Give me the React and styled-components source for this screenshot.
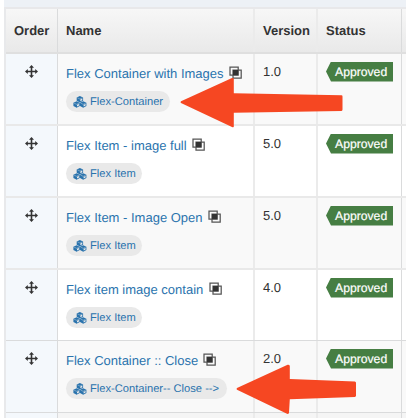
import React from 'react';
import styled, { createGlobalStyle } from 'styled-components';

const Global = createGlobalStyle`
  * { box-sizing: border-box; }
  body { margin: 0; background: #fff; overflow: hidden; }
`;

const Page = styled.main`
  position: relative;
  width: 406px;
  height: 418px;
  padding: 7px 0 0 4px;
  overflow: hidden;
  background: linear-gradient(to right, #fff 4px, transparent 4px),
    linear-gradient(#edf1f6 7px, #f5f5f5 7px);
  font-family: 'Liberation Sans', Arial, sans-serif;
  font-size: 13px;
  text-rendering: geometricPrecision;
  color: #333;
`;

const Table = styled.div`
  display: grid;
  grid-template-rows: 45px 72px 72px 72px 71px 72px 6px;
  border-top: 2px solid #e8e8ea;
  border-left: 2px solid #e8e9eb;
`;

const Row = styled.div`
  display: grid;
  grid-template-columns: 52px 197px 63px 84px 4px;
  background: ${({ $bg }) => $bg};
  border-bottom: ${({ $line }) => $line};
`;

const HeaderRow = styled(Row)`
  background: linear-gradient(#f7f7f7, #e9e9e9);
  border-bottom: 2px solid #dfdfdf;
  font-weight: 700;
  line-height: 16px;
`;

const Cell = styled.div`
  padding: ${({ $top }) => $top || 0}px 0 0 8px;
  white-space: nowrap;
  min-width: 0;
  border-right: ${({ $edge }) => $edge || '2px solid #ebebeb'};
`;

const OrderCell = styled(Cell)`
  display: flex;
  justify-content: center;
  padding: 11px 0 0;
  background: #f4f8fc;
`;

const Title = styled.div`
  display: flex;
  align-items: flex-start;
  height: 25px;
  line-height: 16px;
  color: #2a73ad;
`;

const TitleText = styled.a`
  flex: none;
  width: ${({ $w }) => $w}px;
`;

const CopyIcon = styled.svg`
  flex: none;
  width: 13px;
  height: 13px;
  margin: 0 0 0 4.8px;
`;

const Pill = styled.span`
  display: flex;
  align-items: center;
  width: ${({ $w }) => $w}px;
  height: 21px;
  padding-left: 7px;
  border-radius: 11px;
  background: #e9e9e9;
  color: #2a73ad;
  font-size: 11.15px;
  line-height: 21px;
`;

const PillLabel = styled.span`
  padding-top: 1px;
`;

const CubeIcon = styled.svg`
  width: 14px;
  height: 12px;
  margin-right: 3px;
  flex: none;
`;

const Tag = styled.span`
  display: block;
  width: 67px;
  height: 20px;
  padding-left: 9px;
  background: #467e43;
  clip-path: polygon(5px 0, 100% 0, 100% 100%, 5px 100%, 0 50%);
  color: #fff;
  font-size: 12.2px;
  line-height: 21px;
  -webkit-text-stroke: 0.2px #fff;
`;

const Arrow = styled.svg`
  position: absolute;
  left: ${({ $x }) => $x}px;
  top: ${({ $y }) => $y}px;
  width: ${({ $w }) => $w}px;
  height: 52px;
`;

const dark = '1px solid #dadbdc';
const light = '2px solid #e9e9e9';

const rows = [
  { name: 'Flex Container with Images', nameW: 158, type: 'Flex-Container', pillW: 104, version: '1.0', line: light },
  { name: 'Flex Item - image full', nameW: 121.5, type: 'Flex Item', pillW: 76, version: '5.0', line: light },
  { name: 'Flex Item - Image Open', nameW: 137, type: 'Flex Item', pillW: 76, version: '5.0', line: light },
  { name: 'Flex item image contain', nameW: 138, type: 'Flex Item', pillW: 76, version: '4.0', line: dark },
  { name: 'Flex Container :: Close', nameW: 132, type: 'Flex-Container-- Close -->', pillW: 161, version: '2.0', line: dark },
];

function Move() {
  return (
    <svg width="13" height="13" viewBox="0 0 13 13" fill="#333">
      <path d="M6.5 0 9 2.8H7.3v2.9h2.9V4L13 6.5 10.2 9V7.3H7.3v2.9H9L6.5 13 4 10.2h1.7V7.3H2.8V9L0 6.5 2.8 4v1.7h2.9V2.8H4z" />
    </svg>
  );
}

function Copy() {
  return (
    <CopyIcon viewBox="0 0 13 13">
      <path d="M1 1h8.2v8.2H1zM4 4h8.2v8.2H4z" fill="none" stroke="#555" strokeWidth="1.25" />
      <path d="M4 4h5.2v5.2H4z" fill="#333" />
    </CopyIcon>
  );
}

function Cube({ x, y }) {
  return (
    <g transform={`translate(${x} ${y})`}>
      <path d="M0 1.4 3.2 0l3.2 1.4v3.4L3.2 6.4 0 4.8z" fill="#2a73ad" />
      <path d="M3.6 5.3V3.5l2-.9v1.7z" fill="#e9e9e9" />
      <path d="m.7 1.9 2.5 1.1 2.5-1.1" fill="none" stroke="#e9e9e9" strokeWidth=".4" />
    </g>
  );
}

function Cubes() {
  return (
    <CubeIcon viewBox="0 0 14 12">
      <Cube x={3.7} y={0} />
      <Cube x={0.4} y={5.3} />
      <Cube x={7} y={5.3} />
    </CubeIcon>
  );
}

export default function App() {
  return (
    <>
      <Global />
      <Page>
        <Table>
          <HeaderRow>
            <Cell $top={14} $edge={dark}>Order</Cell>
            <Cell $top={14}>Name</Cell>
            <Cell $top={14}>Version</Cell>
            <Cell $top={14} $edge={dark}>Status</Cell>
          </HeaderRow>
          {rows.map((r, i) => (
            <Row key={r.name} $bg={i % 2 ? '#fff' : '#f9f9f9'} $line={r.line}>
              <OrderCell $edge={dark}><Move /></OrderCell>
              <Cell $top={12}>
                <Title><TitleText $w={r.nameW}>{r.name}</TitleText><Copy /></Title>
                <Pill $w={r.pillW}><Cubes /><PillLabel>{r.type}</PillLabel></Pill>
              </Cell>
              <Cell $top={10}>{r.version}</Cell>
              <Cell $top={7.5} $edge={dark}><Tag>Approved</Tag></Cell>
            </Row>
          ))}
          <Row $bg="#f5f5f5">
            <OrderCell $edge={dark} />
            <Cell />
            <Cell />
            <Cell $edge={dark} />
          </Row>
        </Table>
        <Arrow $x={180} $y={77} $w={163} viewBox="0 0 163 52">
          <path d="M1 24.3Q0 25.3 1 26L52.5 50.2Q54 50.6 53.8 49.3V35.8L161.5 34Q162.5 33.8 162.5 32.5V19.5Q162.5 18.3 161.5 18.2L53.8 16.2V2Q53.8.5 52 1z" fill="#f64722" />
        </Arrow>
        <Arrow $x={236} $y={364} $w={120} viewBox="0 0 120 52">
          <path d="M1 24Q0 25 1 25.8L51 49.8Q53 50.2 53 48.8L53.8 35.3 118.8 33Q120 32.8 120 31.7V18.8Q120 17.5 118.8 17.4L53.8 15V2Q53.5.5 51.6.8z" fill="#f64722" />
        </Arrow>
      </Page>
    </>
  );
}
